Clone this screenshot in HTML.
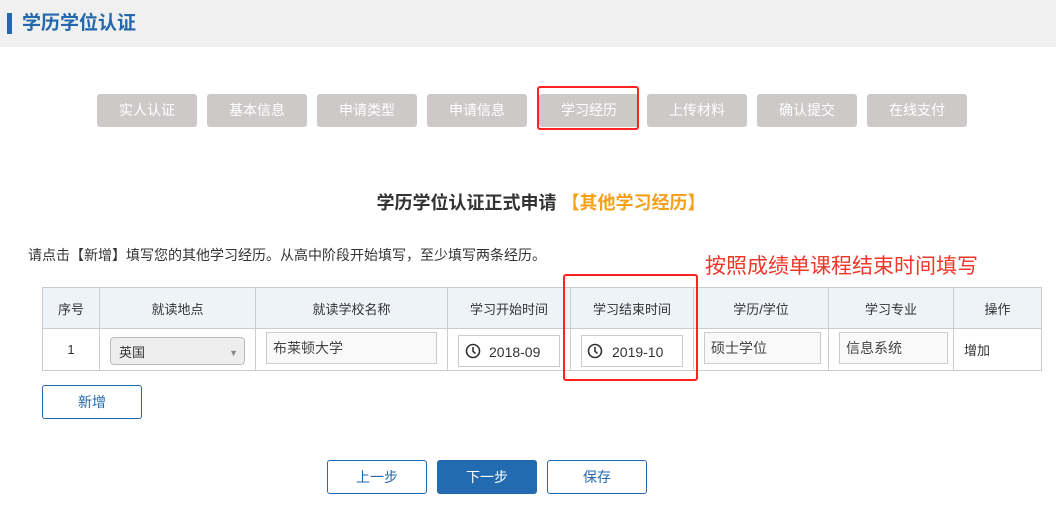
<!DOCTYPE html>
<html><head><meta charset="utf-8"><style>
*{margin:0;padding:0;box-sizing:border-box}
body{width:1056px;height:508px;background:#fff;position:relative;overflow:hidden;font-family:"Liberation Sans","Noto Sans CJK SC",sans-serif;color:#333}
.a{position:absolute}
.hdr{left:0;top:0;width:1056px;height:47px;background:#f0f0f0}
.step{top:94px;width:100px;height:33px;background:#cdc9c9;color:#fff;font-size:14px;line-height:33px;text-align:center;border-radius:3px}
table{position:absolute;left:42px;top:287px;border-collapse:collapse;font-size:13px}
td{border:1px solid #ccc;text-align:center;padding:0}
tr.h td{background:#eef3fa;height:41px;color:#333}
tr.r td{height:42px}
.inp{position:absolute;border:1px solid #ccc;font-size:14px;color:#444;padding-left:6px}
.btn{top:460px;width:100px;height:34px;border:1px solid #2368ac;border-radius:3px;color:#2368ac;font-size:14px;line-height:32px;text-align:center}
</style></head><body>
<div class="a hdr"></div>
<div class="a" style="left:7px;top:13px;width:5px;height:21px;background:#2368ac"></div>
<div class="a" style="left:22px;top:11px;font-size:19px;font-weight:bold;color:#2368ac;line-height:26px">学历学位认证</div>

<div class="a step" style="left:97px">实人认证</div>
<div class="a step" style="left:207px">基本信息</div>
<div class="a step" style="left:317px">申请类型</div>
<div class="a step" style="left:427px">申请信息</div>
<div class="a step" style="left:539px">学习经历</div>
<div class="a step" style="left:647px">上传材料</div>
<div class="a step" style="left:757px">确认提交</div>
<div class="a step" style="left:867px">在线支付</div>
<div class="a" style="left:537px;top:86px;width:102px;height:44px;border:2px solid #f22;border-radius:3px"></div>

<div class="a" style="left:0;width:1056px;top:191px;text-align:center;font-size:18px;font-weight:bold;line-height:24px;color:#333;padding-left:26px">学历学位认证正式申请 <span style="color:#f5a01a">【其他学习经历】</span></div>
<div class="a" style="left:28px;top:246px;font-size:14px;line-height:18px">请点击【新增】填写您的其他学习经历。从高中阶段开始填写，至少填写两条经历。</div>
<div class="a" style="left:705px;top:253px;font-size:21px;line-height:27px;color:#f0372b">按照成绩单课程结束时间填写</div>

<table>
<tr class="h"><td style="width:57px">序号</td><td style="width:156px">就读地点</td><td style="width:192px">就读学校名称</td><td style="width:123px">学习开始时间</td><td style="width:123px">学习结束时间</td><td style="width:135px">学历/学位</td><td style="width:125px">学习专业</td><td style="width:88px">操作</td></tr>
<tr class="r"><td>1</td><td></td><td></td><td></td><td></td><td></td><td></td><td style="text-align:left;padding-left:10px">增加</td></tr>
</table>

<div class="a inp" style="left:110px;top:337px;width:135px;height:28px;background:#eee;border-color:#bbb;border-radius:4px;line-height:30px;font-size:13px;color:#333;padding-left:8px">英国<span style="position:absolute;right:6px;top:0;color:#888;font-size:9px">▼</span></div>
<div class="inp" style="left:266px;top:332px;width:171px;height:32px;background:#f9f9f9;line-height:30px">布莱顿大学</div>
<div class="inp" style="left:458px;top:335px;width:102px;height:32px;background:#fff;line-height:32px;padding-left:30px;color:#333">2018-09</div>
<div class="inp" style="left:581px;top:335px;width:102px;height:32px;background:#fff;line-height:32px;padding-left:30px;color:#333">2019-10</div>
<svg class="a" style="left:465px;top:343px" width="16" height="16" viewBox="0 0 16 16"><circle cx="8" cy="8" r="6.5" fill="none" stroke="#333" stroke-width="1.6"/><path d="M8 4v4.3l2.5 2.2" fill="none" stroke="#333" stroke-width="1.6"/></svg>
<svg class="a" style="left:587px;top:343px" width="16" height="16" viewBox="0 0 16 16"><circle cx="8" cy="8" r="6.5" fill="none" stroke="#333" stroke-width="1.6"/><path d="M8 4v4.3l2.5 2.2" fill="none" stroke="#333" stroke-width="1.6"/></svg>
<div class="inp" style="left:704px;top:332px;width:117px;height:32px;background:#f9f9f9;line-height:30px">硕士学位</div>
<div class="inp" style="left:839px;top:332px;width:109px;height:32px;background:#f9f9f9;line-height:30px">信息系统</div>
<div class="a" style="left:563px;top:274px;width:135px;height:107px;border:2px solid #f22;border-radius:3px"></div>

<div class="a btn" style="left:42px;top:385px;height:34px">新增</div>
<div class="a btn" style="left:327px">上一步</div>
<div class="a btn" style="left:437px;background:#236bb0;color:#fff">下一步</div>
<div class="a btn" style="left:547px">保存</div>
</body></html>
